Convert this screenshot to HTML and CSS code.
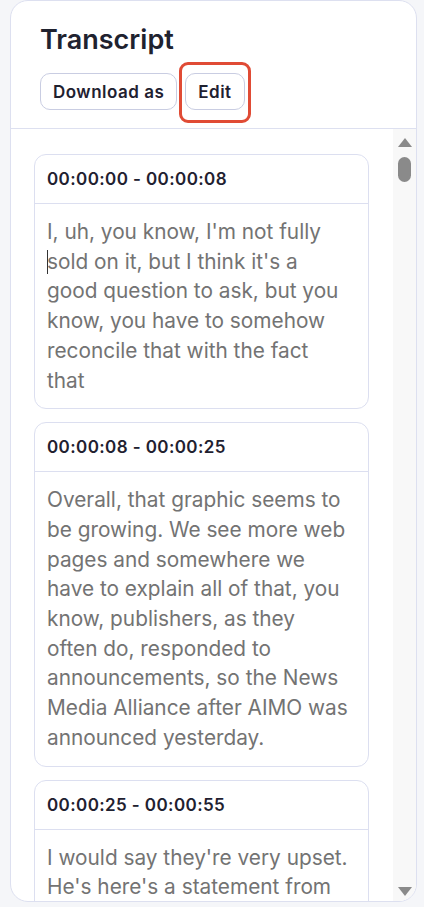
FILE: index.html
```html
<!DOCTYPE html>
<html lang="en">
<head>
<meta charset="utf-8">
<title>Transcript</title>
<link rel="stylesheet" href="styles.css">
</head>
<body>
<section class="panel">
  <header class="panel-head">
    <h1 class="title">Transcript</h1>
    <div class="actions">
      <button class="btn">Download as</button>
      <button class="btn btn-marked">Edit</button>
    </div>
  </header>
  <div class="panel-body">
    <div class="transcript">
      <article class="seg">
        <div class="seg-head">00:00:00 - 00:00:08</div>
        <p class="seg-text">I, uh, you know, I'm not fully <span class="nowrap"><span class="caret"></span>sold</span> on it, but I think it's a good question to ask, but you know, you have to somehow reconcile that with the fact that</p>
      </article>
      <article class="seg">
        <div class="seg-head">00:00:08 - 00:00:25</div>
        <p class="seg-text">Overall, that graphic seems to be growing. We see more web pages and somewhere we have to explain all of that, you know, publishers, as they often do, responded to announcements, so the News Media Alliance after AIMO was announced yesterday.</p>
      </article>
      <article class="seg">
        <div class="seg-head">00:00:25 - 00:00:55</div>
        <p class="seg-text">I would say they're very upset. He's here's a statement from the News Media Alliance that they put out yesterday.</p>
      </article>
    </div>
    <div class="scrollbar" aria-hidden="true">
      <span class="arrow arrow-up"></span>
      <span class="thumb"></span>
      <span class="spacer"></span>
      <span class="arrow arrow-down"></span>
    </div>
  </div>
</section>
</body>
</html>
```

FILE: styles.css
```css
* { box-sizing: border-box; }

body {
  margin: 0;
  background: #f5f6f9;
  font-family: Inter, "Noto Sans", "Liberation Sans", sans-serif;
}

.panel {
  margin: 0 7px 0 10px;
  height: 902px;
  border: 1px solid #dde0f0;
  border-radius: 18px;
  background: #ffffff;
  overflow: hidden;
  display: flex;
  flex-direction: column;
}

.panel-head {
  padding: 21px 28px 18px 29px;
  border-bottom: 1px solid #dde0f0;
}

.title {
  margin: 0;
  font-size: 27px;
  line-height: 36px;
  font-weight: 600;
  color: #20222f;
}

.actions {
  margin-top: 15px;
  display: flex;
  gap: 8px;
}

.btn {
  position: relative;
  height: 37px;
  padding: 0 12px;
  border: 1px solid #c9cde2;
  border-radius: 10px;
  background: #ffffff;
  font-family: inherit;
  font-size: 17px;
  letter-spacing: 0.5px;
  font-weight: 600;
  color: #1f2130;
}

.btn-marked::after {
  content: "";
  position: absolute;
  top: -12px;
  bottom: -14px;
  left: -7px;
  right: -7px;
  border: 3px solid #e04b35;
  border-radius: 9px;
}

.panel-body {
  flex: 1;
  min-height: 0;
  display: flex;
}

.transcript {
  flex: 1;
  min-width: 0;
  overflow: hidden;
  padding: 25px 24px 0 23px;
  display: flex;
  flex-direction: column;
  gap: 13px;
}

.seg {
  flex: none;
  border: 1px solid #dcdff0;
  border-radius: 12px;
  background: #ffffff;
}

.seg-head {
  padding: 13px 12px;
  border-bottom: 1px solid #dcdff0;
  font-size: 17px;
  letter-spacing: 0.4px;
  line-height: 22px;
  font-weight: 600;
  color: #1f2130;
}

.seg-text {
  margin: 0;
  padding: 13px 19px 13px 12px;
  font-size: 20.8px;
  line-height: 29.7px;
  color: #737373;
}

.nowrap { white-space: nowrap; }

.caret {
  display: inline-block;
  width: 1px;
  height: 24px;
  margin-right: -1px;
  vertical-align: -5px;
  background: #333333;
}

.scrollbar {
  width: 23px;
  background: #f8f8f8;
  display: flex;
  flex-direction: column;
  align-items: center;
  padding: 9px 0 5px;
}

.arrow {
  width: 0;
  height: 0;
  border-left: 7.5px solid transparent;
  border-right: 7.5px solid transparent;
}

.arrow-up { border-bottom: 9px solid #8a8a8a; }
.arrow-down { border-top: 9px solid #8a8a8a; }

.thumb {
  margin-top: 10px;
  width: 13px;
  height: 25px;
  border-radius: 7px;
  background: #8a8a8a;
}

.spacer { flex: 1; }
```
